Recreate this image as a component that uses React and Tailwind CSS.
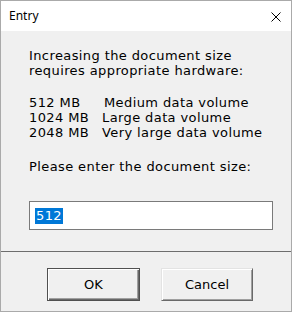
import React from 'react';

const sizes = [
    { size: '512 MB', label: 'Medium data volume', shift: 'ml-[2px]' },
    { size: '1024 MB', label: 'Large data volume', shift: '' },
    { size: '2048 MB', label: 'Very large data volume', shift: '' },
];

const App = () => {
    return (
        <div className="w-[292px] h-[312px] border border-[#aaaaaa] bg-[#f0f0f0] flex flex-col text-black">
            {/* title bar */}
            <div className="h-[30px] bg-white flex items-center justify-between pl-[8px] pr-[10px]">
                <span className="font-['Noto_Sans',sans-serif] text-[12px] leading-none">Entry</span>
                <svg width="10" height="10" viewBox="0 0 10 10" className="mt-[1px]">
                    <path d="M0.5 0.5 L9.5 9.5 M9.5 0.5 L0.5 9.5" stroke="#000" strokeWidth="1" fill="none" />
                </svg>
            </div>

            <div className="flex-1 flex flex-col font-['DejaVu_Sans',sans-serif] text-[13px] leading-[15px]">
                <div className="pl-[28px] pt-[17px] tracking-[0.4px]">
                    <p>Increasing the document size</p>
                    <p>requires appropriate hardware:</p>

                    <div className="mt-[17px] grid grid-cols-[73px_1fr]">
                        {sizes.map((row) => (
                            <React.Fragment key={row.size}>
                                <span>{row.size}</span>
                                <span className={row.shift}>{row.label}</span>
                            </React.Fragment>
                        ))}
                    </div>

                    <p className="mt-[19px]">Please enter the document size:</p>

                    <div className="mt-[27px] w-[244px] h-[29px] border border-[#7a7a7a] bg-white flex items-center pl-[5px]">
                        <span className="bg-[#0078d7] text-white leading-[16px] px-[1px]">512</span>
                    </div>
                </div>

                <div className="mt-[21px] h-px bg-[#6d6d6d]" />

                <div className="flex gap-[21px] pl-[46px] pt-[16px]">
                    <button className="w-[93px] h-[33px] bg-[#f0f0f0] border border-[#505050] shadow-[inset_1px_1px_0_#ffffff,inset_-1px_-1px_0_#696969,inset_-2px_-2px_0_#a0a0a0] flex items-center justify-center">
                        OK
                    </button>
                    <button className="w-[92px] h-[33px] bg-[#f0f0f0] border border-t-[#e3e3e3] border-l-[#e3e3e3] border-b-[#696969] border-r-[#696969] shadow-[inset_1px_1px_0_#ffffff,inset_-1px_-1px_0_#a0a0a0] flex items-center justify-center">
                        Cancel
                    </button>
                </div>
            </div>
        </div>
    );
};

export default App;
